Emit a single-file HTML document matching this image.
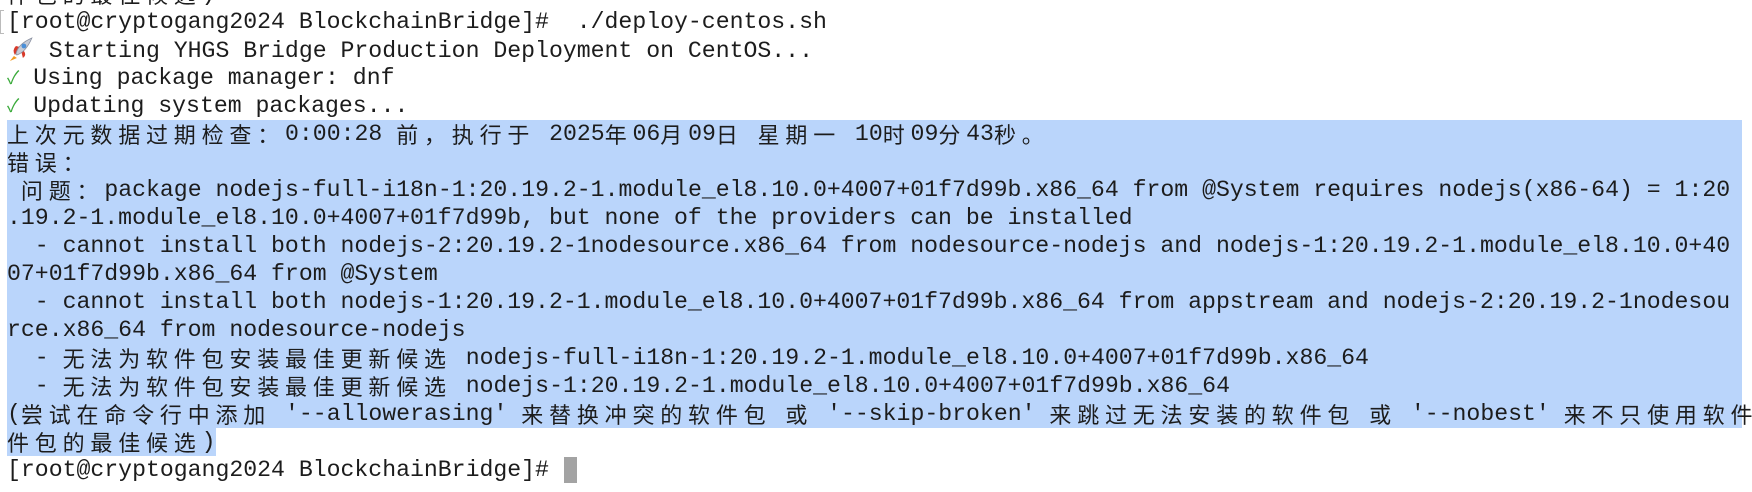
<!DOCTYPE html>
<html><head><meta charset="utf-8"><style>
html,body{margin:0;padding:0;background:#fff;width:1752px;height:492px;overflow:hidden;position:relative}
.l{position:absolute;left:7px;height:28px;line-height:28px;white-space:pre;font-family:"Liberation Mono","Noto Sans CJK SC",monospace;font-size:23.17px;color:#1c1c1c}
.c{font-family:"Noto Sans CJK SC","WenQuanYi Zen Hei",sans-serif;letter-spacing:5.8px;font-size:22px;display:inline-block;height:28px;line-height:28px;vertical-align:top}
.hl{position:absolute;background:#bad5fb}
.g{color:#3aaa3a;font-size:18px}
</style></head><body>
<div class="hl" style="left:7px;top:120px;width:1735px;height:308px"></div>
<div class="hl" style="left:7px;top:428px;width:209px;height:28px"></div>
<div style="position:absolute;left:0;top:10px;width:4px;height:24px;border:1px solid #bbb;border-right:none;box-sizing:border-box"></div>
<div class="l" style="top:-20px"><span class="c">件包的最佳候选</span>)</div>
<div class="l" style="top:8px">[root@cryptogang2024 BlockchainBridge]#  ./deploy-centos.sh</div>
<div class="l" style="top:36px"><svg width="27.8" height="26" viewBox="0 0 26 26" style="vertical-align:-5px"><path d="M6 20 L2 25 L9 22 Z" fill="#f39a1e"/><path d="M7 19 Q4 14 8 10 L12 11 Z" fill="#d83a2a"/><path d="M13 14 L15 22 Q19 19 16 15 Z" fill="#d83a2a"/><path d="M8 18 Q10 8 24 2 Q18 16 9 19 Z" fill="#c8ccd6" stroke="#8a90a0" stroke-width="0.8"/><circle cx="16" cy="10" r="2.4" fill="#4a8fd8"/></svg> Starting YHGS Bridge Production Deployment on CentOS...</div>
<div class="l" style="top:64px"><span class="g">✓</span> Using package manager: dnf</div>
<div class="l" style="top:92px"><span class="g">✓</span> Updating system packages...</div>
<div class="l" style="top:120px"><span class="c">上次元数据过期检查：</span>0:00:28 <span class="c">前，执行于</span> 2025<span class="c">年</span>06<span class="c">月</span>09<span class="c">日</span> <span class="c">星期一</span> 10<span class="c">时</span>09<span class="c">分</span>43<span class="c">秒。</span></div>
<div class="l" style="top:148px"><span class="c">错误：</span></div>
<div class="l" style="top:176px"> <span class="c">问题：</span>package nodejs-full-i18n-1:20.19.2-1.module_el8.10.0+4007+01f7d99b.x86_64 from @System requires nodejs(x86-64) = 1:20</div>
<div class="l" style="top:204px">.19.2-1.module_el8.10.0+4007+01f7d99b, but none of the providers can be installed</div>
<div class="l" style="top:232px">  - cannot install both nodejs-2:20.19.2-1nodesource.x86_64 from nodesource-nodejs and nodejs-1:20.19.2-1.module_el8.10.0+40</div>
<div class="l" style="top:260px">07+01f7d99b.x86_64 from @System</div>
<div class="l" style="top:288px">  - cannot install both nodejs-1:20.19.2-1.module_el8.10.0+4007+01f7d99b.x86_64 from appstream and nodejs-2:20.19.2-1nodesou</div>
<div class="l" style="top:316px">rce.x86_64 from nodesource-nodejs</div>
<div class="l" style="top:344px">  - <span class="c">无法为软件包安装最佳更新候选</span> nodejs-full-i18n-1:20.19.2-1.module_el8.10.0+4007+01f7d99b.x86_64</div>
<div class="l" style="top:372px">  - <span class="c">无法为软件包安装最佳更新候选</span> nodejs-1:20.19.2-1.module_el8.10.0+4007+01f7d99b.x86_64</div>
<div class="l" style="top:400px">(<span class="c">尝试在命令行中添加</span> '--allowerasing' <span class="c">来替换冲突的软件包</span> <span class="c">或</span> '--skip-broken' <span class="c">来跳过无法安装的软件包</span> <span class="c">或</span> '--nobest' <span class="c">来不只使用软件</span></div>
<div class="l" style="top:428px"><span class="c">件包的最佳候选</span>)</div>
<div class="l" style="top:456px">[root@cryptogang2024 BlockchainBridge]# </div>
<div style="position:absolute;left:564px;top:457px;width:13px;height:26px;background:#a3a3a3"></div>
</body></html>
